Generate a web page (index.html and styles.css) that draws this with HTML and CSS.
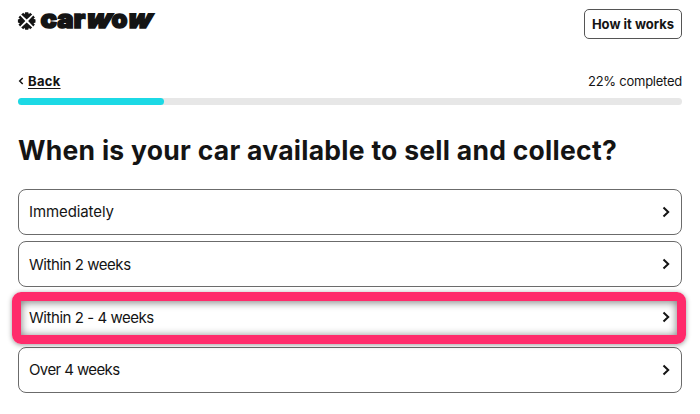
FILE: index.html
```
<!DOCTYPE html>
<html lang="en">
<head>
    <meta charset="UTF-8">
    <meta name="viewport" content="width=device-width, initial-scale=1.0">
    <title>Sell your car - carwow</title>
    <link rel="stylesheet" href="styles.css">
</head>
<body>
    <header class="header">
        <svg class="logo" width="140" height="24" viewBox="0 0 140 24" role="img" aria-label="carwow">
            <g transform="translate(8.7 12)" fill="#141414">
                <path id="spoke" d="M0-1.4-5.5-6.6-3.4-8.2-2.2-6.8-1.5-8.8H1.5L2.2-6.8 3.4-8.2 5.5-6.6Z"/>
                <use href="#spoke" transform="rotate(90)"/>
                <use href="#spoke" transform="rotate(180)"/>
                <use href="#spoke" transform="rotate(270)"/>
            </g>
            <g class="logo-text">
                <text x="22.5" y="18.5" textLength="45" lengthAdjust="spacingAndGlyphs">car</text>
                <text transform="translate(66.5 18.5) skewX(-16)" textLength="25" lengthAdjust="spacingAndGlyphs">w</text>
                <text x="93.5" y="18.5" textLength="16" lengthAdjust="spacingAndGlyphs">o</text>
                <text transform="translate(108 18.5) skewX(-16)" textLength="24" lengthAdjust="spacingAndGlyphs">w</text>
            </g>
        </svg>
        <button class="how-button">How it works</button>
    </header>

    <main>
        <div class="progress-row">
            <a class="back" href="#">
                <svg width="6" height="8" viewBox="0 0 6 8"><path d="M4.7 1 1.7 4l3 3"/></svg>
                <span>Back</span>
            </a>
            <span class="completed">22% completed</span>
        </div>
        <div class="progress"><div class="progress-bar" style="width: 22%"></div></div>

        <h1>When is your car available to sell and collect?</h1>

        <div class="options">
            <button class="option">
                <span class="single-word">Immediately</span>
                <svg width="8" height="12" viewBox="0 0 8 12"><path d="m1.5 1.5 4.7 4.5-4.7 4.5"/></svg>
            </button>
            <button class="option">
                <span>Within 2 weeks</span>
                <svg width="8" height="12" viewBox="0 0 8 12"><path d="m1.5 1.5 4.7 4.5-4.7 4.5"/></svg>
            </button>
            <button class="option highlighted">
                <span>Within 2 - 4 weeks</span>
                <svg width="8" height="12" viewBox="0 0 8 12"><path d="m1.5 1.5 4.7 4.5-4.7 4.5"/></svg>
            </button>
            <button class="option">
                <span class="last-label">Over 4 weeks</span>
                <svg width="8" height="12" viewBox="0 0 8 12"><path d="m1.5 1.5 4.7 4.5-4.7 4.5"/></svg>
            </button>
        </div>
    </main>
</body>
</html>
```
FILE: styles.css
```
* {
    box-sizing: border-box;
}
body {
    margin: 0;
    padding: 9px 18px 0;
    font-family: Inter, "Liberation Sans", sans-serif;
    background-color: #fff;
    color: #141414;
}
button {
    font-family: inherit;
    color: inherit;
    background-color: #fff;
}
.header {
    display: flex;
    justify-content: space-between;
    align-items: flex-start;
    height: 62px;
}
.logo {
    display: block;
    overflow: visible;
}
.logo-text {
    font-size: 26px;
    font-weight: 900;
    fill: #141414;
    stroke: #141414;
    stroke-width: 1.5;
}
.how-button {
    width: 98px;
    height: 30px;
    padding: 0;
    border: 1px solid #555;
    border-radius: 5px;
    font-size: 13px;
    font-weight: 700;
    white-space: nowrap;
}
.progress-row {
    display: flex;
    justify-content: space-between;
    align-items: center;
    height: 20px;
    font-size: 13px;
}
.completed {
    letter-spacing: -0.25px;
}
.back {
    display: flex;
    align-items: center;
    gap: 4px;
    color: inherit;
    font-weight: 700;
    text-decoration: none;
}
.back span {
    letter-spacing: 0.3px;
    text-decoration: underline;
    text-underline-offset: 2px;
}
.back svg, .option svg {
    fill: none;
    stroke: #141414;
    stroke-width: 1.5;
}
.progress {
    height: 7px;
    margin-top: 7px;
    border-radius: 4px;
    background-color: #e7e7e7;
}
.progress-bar {
    height: 100%;
    border-radius: 4px;
    background-color: #1cd9e5;
}
h1 {
    margin: 28px 0 0;
    height: 55.6px;
    font-size: 26.5px;
    line-height: 34px;
    font-weight: 700;
    letter-spacing: 0.27px;
    white-space: nowrap;
}
.options {
    display: grid;
    gap: 6.8px;
}
.option {
    position: relative;
    display: flex;
    justify-content: space-between;
    align-items: center;
    height: 46px;
    padding: 0 11px 0 10px;
    border: 1px solid #6b6b6b;
    border-radius: 8px;
    font-size: 15px;
    letter-spacing: -0.45px;
    text-align: left;
}
.single-word {
    letter-spacing: -0.1px;
}
.last-label {
    letter-spacing: -0.6px;
}
.option svg {
    stroke-width: 2;
}
.highlighted {
    z-index: 1;
}
.highlighted::after {
    content: "";
    position: absolute;
    inset: -3px -5px -5px -7px;
    border: 9px solid #ff2b6b;
    border-radius: 9px;
    box-shadow: 0 1px 5px rgba(0,0,0,0.4), inset 0 1px 8px rgba(0,0,0,0.55);
}
```
